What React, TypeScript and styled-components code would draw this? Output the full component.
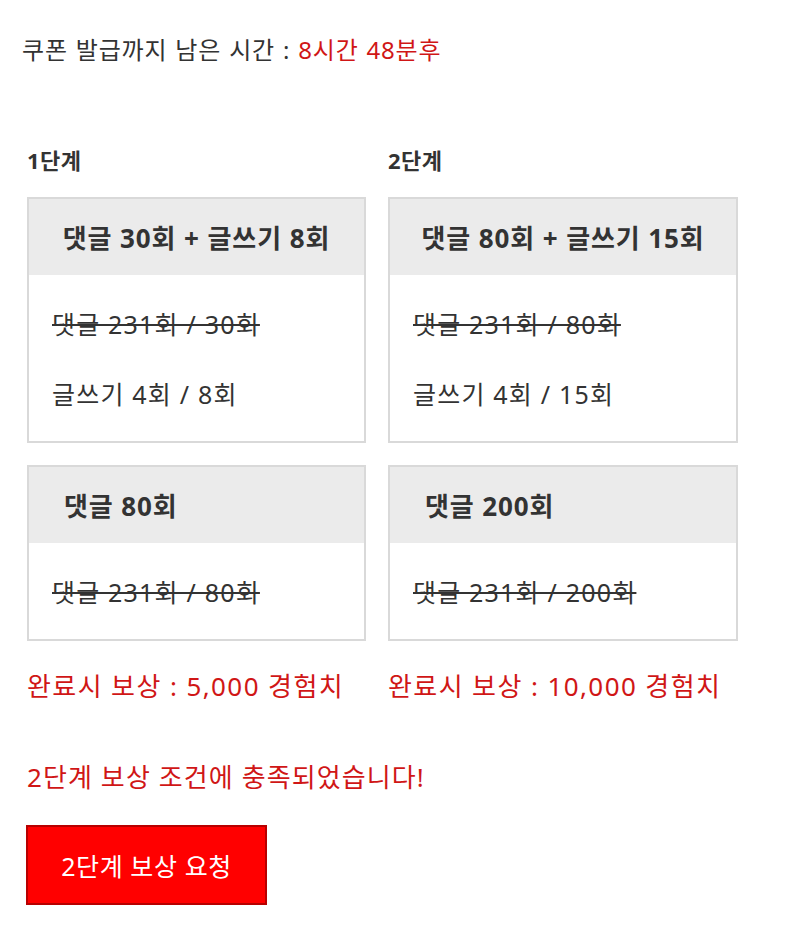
import React from 'react'
import styled, { createGlobalStyle } from 'styled-components'

const FONT = '"Noto Sans", "Noto Sans CJK KR", sans-serif'

const GlobalStyle = createGlobalStyle`
  * { box-sizing: border-box; }
  body {
    margin: 0;
    background: #ffffff;
    font-family: ${FONT};
    color: #333333;
  }
`

const RED = '#d01616'

interface Stage {
  label: string
  missions: {
    title: string
    align: 'center' | 'left'
    rows: { text: string; done: boolean }[]
  }[]
  reward: string
}

const stages: Stage[] = [
  {
    label: '1단계',
    missions: [
      {
        title: '댓글 30회 + 글쓰기 8회',
        align: 'center',
        rows: [
          { text: '댓글 231회 / 30회', done: true },
          { text: '글쓰기 4회 / 8회', done: false },
        ],
      },
      {
        title: '댓글 80회',
        align: 'left',
        rows: [{ text: '댓글 231회 / 80회', done: true }],
      },
    ],
    reward: '완료시 보상 : 5,000 경험치',
  },
  {
    label: '2단계',
    missions: [
      {
        title: '댓글 80회 + 글쓰기 15회',
        align: 'center',
        rows: [
          { text: '댓글 231회 / 80회', done: true },
          { text: '글쓰기 4회 / 15회', done: false },
        ],
      },
      {
        title: '댓글 200회',
        align: 'left',
        rows: [{ text: '댓글 231회 / 200회', done: true }],
      },
    ],
    reward: '완료시 보상 : 10,000 경험치',
  },
]

export default function App() {
  return (
    <Page>
      <GlobalStyle />
      <Countdown>
        쿠폰 발급까지 남은 시간 : <Red>8시간 48분후</Red>
      </Countdown>

      <Stages>
        {stages.map((stage) => (
          <Column key={stage.label}>
            <StageLabel>{stage.label}</StageLabel>
            {stage.missions.map((mission) => (
              <MissionBox key={mission.title}>
                <MissionTitle align={mission.align}>{mission.title}</MissionTitle>
                <MissionBody>
                  {mission.rows.map((row) => (
                    <MissionRow key={row.text} done={row.done}>
                      {row.text}
                    </MissionRow>
                  ))}
                </MissionBody>
              </MissionBox>
            ))}
            <Reward>{stage.reward}</Reward>
          </Column>
        ))}
      </Stages>

      <Notice>2단계 보상 조건에 충족되었습니다!</Notice>
      <RequestButton>2단계 보상 요청</RequestButton>
    </Page>
  )
}

const Page = styled.div`
  padding: 35px 0 40px 27px;
`

const Countdown = styled.div`
  margin-left: -5px;
  font-size: 24px;
  line-height: 30px;
  word-spacing: 1px;
  letter-spacing: 0.8px;
  color: #333333;
`

const Red = styled.span`
  color: ${RED};
`

const Stages = styled.div`
  display: grid;
  grid-template-columns: 339px 350px;
  column-gap: 22px;
  margin-top: 80px;
`

const Column = styled.div`
  display: flex;
  flex-direction: column;
  gap: 22px;
`

const StageLabel = styled.div`
  font-size: 22px;
  font-weight: 700;
  line-height: 30px;
  letter-spacing: 0.5px;
  color: #333333;
`

const MissionBox = styled.div`
  border: 2px solid #d9d9d9;
  background: #ffffff;
`

const MissionTitle = styled.div<{ align: 'center' | 'left' }>`
  height: 76px;
  display: flex;
  align-items: center;
  justify-content: ${(p) => (p.align === 'center' ? 'center' : 'flex-start')};
  padding-left: ${(p) => (p.align === 'center' ? '0' : '35px')};
  background: #ebebeb;
  font-size: 26px;
  font-weight: 700;
  letter-spacing: 0.9px;
  color: #333333;
`

const MissionBody = styled.div`
  padding: 13px 23px;
`

const MissionRow = styled.div<{ done: boolean }>`
  height: 70px;
  display: flex;
  align-items: center;
  font-size: 25px;
  letter-spacing: 1.2px;
  color: #333333;
  text-decoration: ${(p) => (p.done ? 'line-through' : 'none')};
  text-decoration-thickness: 2px;
`

const Reward = styled.div`
  margin-top: 8px;
  font-size: 26px;
  line-height: 30px;
  letter-spacing: 1.4px;
  color: ${RED};
`

const Notice = styled.div`
  margin-top: 61px;
  font-size: 26px;
  line-height: 30px;
  letter-spacing: 1.1px;
  color: ${RED};
`

const RequestButton = styled.button`
  display: block;
  margin-top: 33px;
  margin-left: -1px;
  width: 241px;
  height: 80px;
  border: 2px solid #b80000;
  background: #ff0000;
  color: #ffffff;
  font-family: ${FONT};
  font-size: 25px;
  letter-spacing: 0.6px;
  cursor: pointer;
`
